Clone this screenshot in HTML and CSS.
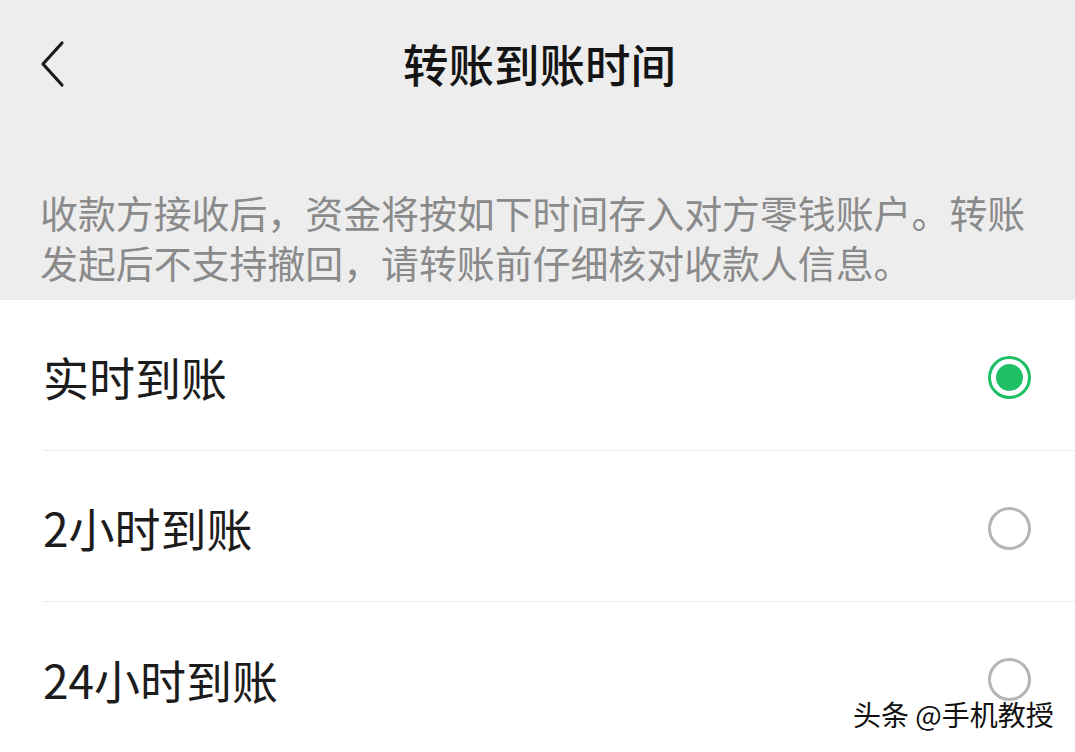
FILE: index.html
```html
<!DOCTYPE html>
<html>
<head>
    <title>转账到账时间</title>
    <link rel="stylesheet" href="styles.css">
</head>
<body>
    <div class="top">
        <div class="navbar">
            <svg class="back" width="30" height="48" viewBox="0 0 30 48">
                <path d="M24 3 L5 24 L24 45" fill="none" stroke="#1a1a1a" stroke-width="3.2" stroke-linecap="round" stroke-linejoin="round"/>
            </svg>
            <div class="title">转账到账时间</div>
        </div>
        <div class="desc">收款方接收后，资金将按如下时间存入对方零钱账户。转账发起后不支持撤回，请转账前仔细核对收款人信息。</div>
    </div>

    <div class="list">
        <div class="row">
            <span class="label">实时到账</span>
            <span class="radio checked"></span>
        </div>
        <div class="row">
            <span class="label">2小时到账</span>
            <span class="radio"></span>
        </div>
        <div class="row">
            <span class="label">24小时到账</span>
            <span class="radio"></span>
        </div>
    </div>

    <div class="watermark">头条 @手机教授</div>
</body>
</html>
```

FILE: styles.css
```css
body {
    margin: 0;
    font-family: "Noto Sans CJK SC", "Noto Sans", sans-serif;
    background-color: white;
    width: 1075px;
    height: 752px;
    overflow: hidden;
    position: relative;
}
.top {
    background-color: #ededed;
}
.navbar {
    height: 130px;
    display: flex;
    align-items: center;
    justify-content: center;
    position: relative;
}
.back {
    position: absolute;
    left: 38px;
    top: 40px;
}
.title {
    font-size: 45.5px;
    font-weight: 500;
    color: #141414;
    margin-left: 4px;
    margin-top: -4px;
}
.desc {
    padding: 57px 40px 13px 40px;
    font-size: 37.9px;
    line-height: 50px;
    color: #8a8a8a;
}
.list {
    margin-left: 43px;
}
.row {
    height: 151px;
    display: flex;
    align-items: center;
    justify-content: space-between;
    padding-right: 44px;
    border-bottom: 1px solid #ececec;
    box-sizing: border-box;
}
.row:last-child {
    border-bottom: none;
}
.label {
    font-size: 46px;
    color: #1c1c1c;
    margin-top: 2px;
}
.radio {
    width: 37px;
    height: 37px;
    border: 3px solid #b5b5b5;
    border-radius: 50%;
    margin-top: 4px;
    position: relative;
}
.radio.checked {
    border-color: #1fbf66;
}
.radio.checked::after {
    content: "";
    position: absolute;
    left: 5px;
    top: 5px;
    width: 27px;
    height: 27px;
    border-radius: 50%;
    background-color: #1fbf66;
}
.watermark {
    position: absolute;
    left: 853px;
    top: 694px;
    font-size: 28px;
    color: #111;
    text-shadow: 1px 1px 0 white, -1px -1px 0 white, 1px -1px 0 white, -1px 1px 0 white;
}
```
